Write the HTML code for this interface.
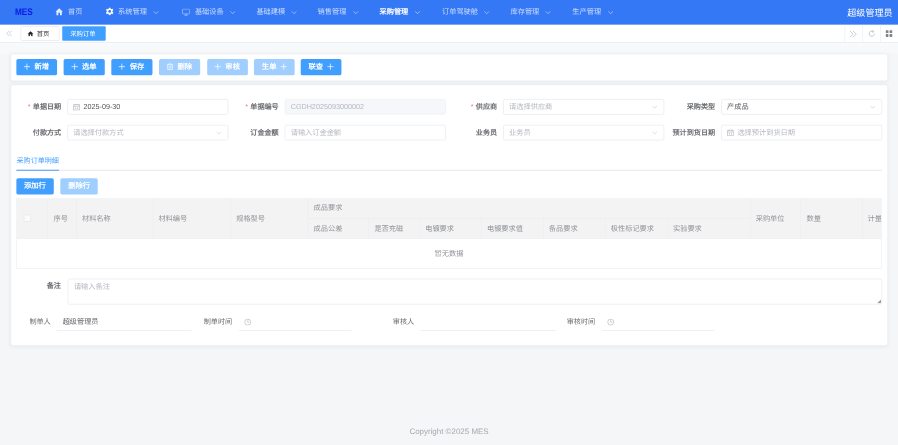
<!DOCTYPE html><html lang="zh-CN"><head><meta charset="utf-8"><title>MES</title><style>
*{box-sizing:border-box;margin:0;padding:0}
html,body{width:898px;height:445px;overflow:hidden;background:#f5f6f8}
body{font-family:"Liberation Sans",sans-serif;}
#root{position:absolute;left:0;top:0;width:1920px;height:951.5px;transform:scale(0.4677083);transform-origin:0 0;background:#f5f6f8;overflow:hidden;font-size:15px;color:#606266;text-rendering:geometricPrecision;filter:blur(0.5px)}
.abs{position:absolute;white-space:nowrap}
#hdr{position:absolute;left:0;top:0;width:1920px;height:53px;background:#3478f6}
.mi{position:absolute;top:0;height:54px;line-height:52.5px;font-size:15.4px;color:rgba(255,255,255,.72);white-space:nowrap}
.chev{position:absolute;top:20px;width:13.4px;height:13.4px;margin-left:-1.2px}
#tabs{position:absolute;left:0;top:53px;width:1920px;height:38px;background:#fff;border-bottom:1px solid #cdd0d8;box-shadow:0 1px 3px rgba(0,0,0,.06)}
.tab{position:absolute;top:3.4px;height:31px;line-height:29.5px;font-size:13.6px;border:1px solid #d8dce5;background:#fff;color:#333;white-space:nowrap;border-radius:2px}
.tab.on{background:#409eff;border-color:#409eff;color:#fff}
.tool{position:absolute;top:0;width:38px;height:37.5px;border-left:1px solid #e6e8ee}
.card{position:absolute;left:22.6px;width:1875.2px;background:#fff;border-radius:4px;border:1px solid #e9ecf3;box-shadow:0 2px 10px rgba(0,0,0,.055)}
.btn{position:absolute;height:35px;line-height:35px;margin-top:-1px;border-radius:4px;background:#409eff;color:#fff;font-size:15.6px;font-weight:bold;text-align:center;white-space:nowrap}
.btn.dis{background:#a0cfff}
.lbl{position:absolute;text-align:right;font-size:15.2px;color:#6a6c70;font-weight:bold;white-space:nowrap;height:33px;line-height:33px;width:140px}
.lbl i{color:#f56c6c;font-style:normal;font-weight:normal;margin-right:5px}
.inp{position:absolute;height:33px;line-height:31px;border:1px solid #dcdfe6;border-radius:4px;background:#fff;font-size:15.4px;color:#56585c;white-space:nowrap;overflow:hidden;padding-left:12px}
.inp.ph{color:#b4b8c0}
.inp.dis{background:#f5f7fa;border-color:#e8ebf0;color:#b4b8c0}
.inp svg.ar{position:absolute;right:13px;top:10px;width:12px;height:12px}
.th{position:absolute;font-size:15.4px;color:#909399;white-space:nowrap;line-height:20px}
.vl{position:absolute;width:1px;background:#e9ebf0}
.hl{position:absolute;height:1px;background:#e6e8ee}
.ul{position:absolute;height:1px;background:#dcdfe6}
</style></head><body><div id="root">
<div id="hdr">
<div class="abs" style="left:31.6px;top:0px;line-height:51px;font-size:20.5px;font-weight:bold;color:#0b18e6;transform:scaleX(.86);transform-origin:0 50%">MES</div>
<svg class="abs" style="left:118.4px;top:17px;width:17px;height:16.5px" viewBox="0 0 16 16"><path d="M8 0.8 L0.3 8 H2.4 V15.2 H6.3 V10 H9.7 V15.2 H13.6 V8 H15.7 Z" fill="rgba(255,255,255,.85)"/></svg>
<div class="mi" style="left:145.6px">首页</div>
<svg class="abs" style="left:225.6px;top:16.4px;width:17px;height:17px" viewBox="-8 -8 16 16"><g fill="rgba(255,255,255,.9)"><circle r="5.6"/><rect x="-2" y="-7.8" width="4" height="15.6" rx="0.8"/><rect x="-2" y="-7.8" width="4" height="15.6" rx="0.8" transform="rotate(60)"/><rect x="-2" y="-7.8" width="4" height="15.6" rx="0.8" transform="rotate(120)"/></g><circle r="2.7" fill="#3478f6"/></svg>
<div class="mi" style="left:252.5px">系统管理</div>
<svg class="chev" style="left:328.0px" viewBox="0 0 12 12"><path d="M1.5 3.8 L6 8.3 L10.5 3.8" fill="none" stroke="rgba(255,255,255,.62)" stroke-width="1.45"/></svg>
<svg class="abs" style="left:388.5px;top:17.5px;width:17.5px;height:16px" viewBox="0 0 18 16"><rect x="1.2" y="1.2" width="15.6" height="10.6" rx="1.6" fill="none" stroke="rgba(255,255,255,.62)" stroke-width="1.4"/><path d="M5.5 14.8 H12.5 M9 12 V14.8" stroke="rgba(255,255,255,.62)" stroke-width="1.5" fill="none"/></svg>
<div class="mi" style="left:416.7px">基础设备</div>
<svg class="chev" style="left:492.2px" viewBox="0 0 12 12"><path d="M1.5 3.8 L6 8.3 L10.5 3.8" fill="none" stroke="rgba(255,255,255,.62)" stroke-width="1.45"/></svg>
<div class="mi" style="left:548.2px">基础建模</div>
<svg class="chev" style="left:623.5px" viewBox="0 0 12 12"><path d="M1.5 3.8 L6 8.3 L10.5 3.8" fill="none" stroke="rgba(255,255,255,.62)" stroke-width="1.45"/></svg>
<div class="mi" style="left:679.1px">销售管理</div>
<svg class="chev" style="left:755.6px" viewBox="0 0 12 12"><path d="M1.5 3.8 L6 8.3 L10.5 3.8" fill="none" stroke="rgba(255,255,255,.62)" stroke-width="1.45"/></svg>
<div class="mi" style="left:811.4px;color:#fff;font-weight:bold">采购管理</div>
<svg class="chev" style="left:887.3px" viewBox="0 0 12 12"><path d="M1.5 3.8 L6 8.3 L10.5 3.8" fill="none" stroke="rgba(255,255,255,.66)" stroke-width="1.45"/></svg>
<div class="mi" style="left:945.0px">订单驾驶舱</div>
<svg class="chev" style="left:1034.8px" viewBox="0 0 12 12"><path d="M1.5 3.8 L6 8.3 L10.5 3.8" fill="none" stroke="rgba(255,255,255,.62)" stroke-width="1.45"/></svg>
<div class="mi" style="left:1091.5px">库存管理</div>
<svg class="chev" style="left:1166.5px" viewBox="0 0 12 12"><path d="M1.5 3.8 L6 8.3 L10.5 3.8" fill="none" stroke="rgba(255,255,255,.62)" stroke-width="1.45"/></svg>
<div class="mi" style="left:1223.6px">生产管理</div>
<svg class="chev" style="left:1300.0px" viewBox="0 0 12 12"><path d="M1.5 3.8 L6 8.3 L10.5 3.8" fill="none" stroke="rgba(255,255,255,.62)" stroke-width="1.45"/></svg>
<div class="abs" style="left:1811.6px;top:2.6px;line-height:51px;font-size:19.4px;color:#fff">超级管理员</div>
</div>
<div id="tabs">
<svg class="abs" style="left:12.0px;top:11px;width:15px;height:15px" viewBox="0 0 12 12"><path d="M6 1.5 L1.5 6 L6 10.5 M10.5 1.5 L6 6 L10.5 10.5" fill="none" stroke="#c4c8d0" stroke-width="1.3"/></svg>
<div class="tab" style="left:43.6px;width:83.4px"><svg style="position:absolute;left:14px;top:8.6px;width:12.5px;height:12.5px" viewBox="0 0 16 16"><path d="M8 1 L0.5 8 H2.5 V15 H6.3 V10 H9.7 V15 H13.5 V8 H15.5 Z" fill="#222"/></svg><span style="position:absolute;left:34px">首页</span></div>
<div class="tab on" style="left:133.0px;width:93.4px;padding-left:16px">采购订单</div>
<div class="tool" style="left:1806px">
<svg style="position:absolute;left:7.5px;top:10.5px;width:18px;height:18px" viewBox="0 0 12 12"><path d="M1.5 1.5 L6 6 L1.5 10.5 M6 1.5 L10.5 6 L6 10.5" fill="none" stroke="#c6c9d0" stroke-width="1.3"/></svg>
</div>
<div class="tool" style="left:1844px">
<svg style="position:absolute;left:10.5px;top:11px;width:16px;height:16px" viewBox="0 0 12 12"><path d="M10.2 6 A4.2 4.2 0 1 1 8.2 2.4" fill="none" stroke="#b4b8c0" stroke-width="1.25"/><path d="M7.0 0.6 L9.4 2.7 L6.6 3.9" fill="none" stroke="#b4b8c0" stroke-width="1.15"/></svg>
</div>
<div class="tool" style="left:1882px">
<svg style="position:absolute;left:10px;top:10.5px;width:15.5px;height:15.5px" viewBox="0 0 12 12"><g fill="#80838a"><rect x="0.5" y="0.5" width="4.6" height="4.6" rx="1"/><rect x="6.9" y="0.5" width="4.6" height="4.6" rx="1"/><rect x="0.5" y="6.9" width="4.6" height="4.6" rx="1"/><rect x="6.9" y="6.9" width="4.6" height="4.6" rx="1"/></g></svg>
</div>
</div>
<div class="abs" style="left:0;top:91px;width:1920px;height:24px;background:linear-gradient(#f9fafc,#f7f8fa)"></div>
<div class="card" style="top:115.1px;height:57.6px"></div>
<div class="btn" style="left:34.6px;top:126.6px;width:87.4px"><svg style="position:absolute;left:15.2px;top:9.5px;width:15px;height:15px" viewBox="0 0 14 14"><path d="M7 0.8 V13.2 M0.8 7 H13.2" stroke="#fff" stroke-width="1.4" fill="none"/></svg><span style="position:absolute;left:39px">新增</span></div>
<div class="btn" style="left:136.4px;top:126.6px;width:87.4px"><svg style="position:absolute;left:15.2px;top:9.5px;width:15px;height:15px" viewBox="0 0 14 14"><path d="M7 0.8 V13.2 M0.8 7 H13.2" stroke="#fff" stroke-width="1.4" fill="none"/></svg><span style="position:absolute;left:39px">选单</span></div>
<div class="btn" style="left:238.2px;top:126.6px;width:87.4px"><svg style="position:absolute;left:15.2px;top:9.5px;width:15px;height:15px" viewBox="0 0 14 14"><path d="M7 0.8 V13.2 M0.8 7 H13.2" stroke="#fff" stroke-width="1.4" fill="none"/></svg><span style="position:absolute;left:39px">保存</span></div>
<div class="btn dis" style="left:340.4px;top:126.6px;width:87.4px"><svg style="position:absolute;left:15.2px;top:9.5px;width:15px;height:15px" viewBox="0 0 14 14"><path d="M0.8 3.2 H13.2 M4.6 3 V1.2 H9.4 V3 M2.4 3.4 V12.8 H11.6 V3.4 M5.6 5.8 V10.4 M8.4 5.8 V10.4" stroke="#fff" stroke-width="1.3" fill="none"/></svg><span style="position:absolute;left:39px">删除</span></div>
<div class="btn dis" style="left:442.8px;top:126.6px;width:87.4px"><svg style="position:absolute;left:15.2px;top:9.5px;width:15px;height:15px" viewBox="0 0 14 14"><path d="M7 0.8 V13.2 M0.8 7 H13.2" stroke="#fff" stroke-width="1.4" fill="none"/></svg><span style="position:absolute;left:39px">审核</span></div>
<div class="btn dis" style="left:542.9px;top:126.6px;width:87.4px"><span style="position:absolute;left:17px">生单</span><svg style="position:absolute;left:56px;top:9.5px;width:15px;height:15px" viewBox="0 0 14 14"><path d="M7 0.8 V13.2 M0.8 7 H13.2" stroke="#fff" stroke-width="1.4" fill="none"/></svg></div>
<div class="btn" style="left:642.5px;top:126.6px;width:87.4px"><span style="position:absolute;left:17px">联查</span><svg style="position:absolute;left:56px;top:9.5px;width:15px;height:15px" viewBox="0 0 14 14"><path d="M7 0.8 V13.2 M0.8 7 H13.2" stroke="#fff" stroke-width="1.4" fill="none"/></svg></div>
<div class="card" style="top:181.4px;height:557.1999999999999px"></div>
<div class="lbl" style="left:-9.1px;top:212.1px"><i>*</i>单据日期</div>
<div class="inp" style="left:143.5px;top:212.1px;width:344.2px;padding-left:34px"><svg style="position:absolute;left:11px;top:8px;width:15.5px;height:15.5px" viewBox="0 0 14 14"><path d="M1.2 2.4 H12.8 V12.8 H1.2 Z M1.2 5.6 H12.8 M4.2 0.8 V3.6 M9.8 0.8 V3.6 M5 7.5 V11 M9 7.5 V11" stroke="#a9adb6" stroke-width="1.15" fill="none"/></svg>2025-09-30</div>
<div class="lbl" style="left:455.9px;top:212.1px"><i>*</i>单据编号</div>
<div class="inp dis" style="left:608.5px;top:212.1px;width:344.2px">CGDH2025093000002</div>
<div class="lbl" style="left:922.9px;top:212.1px"><i>*</i>供应商</div>
<div class="inp ph" style="left:1075.5px;top:212.1px;width:344.2px"><svg class="ar" viewBox="0 0 12 12"><path d="M1.5 3.8 L6 8.3 L10.5 3.8" fill="none" stroke="#c0c4cc" stroke-width="1.2"/></svg>请选择供应商</div>
<div class="lbl" style="left:1389.0px;top:212.1px">采购类型</div>
<div class="inp" style="left:1541.6px;top:212.1px;width:344.2px"><svg class="ar" viewBox="0 0 12 12"><path d="M1.5 3.8 L6 8.3 L10.5 3.8" fill="none" stroke="#c0c4cc" stroke-width="1.2"/></svg>产成品</div>
<div class="lbl" style="left:-9.1px;top:266.8px">付款方式</div>
<div class="inp ph" style="left:143.5px;top:266.8px;width:344.2px"><svg class="ar" viewBox="0 0 12 12"><path d="M1.5 3.8 L6 8.3 L10.5 3.8" fill="none" stroke="#c0c4cc" stroke-width="1.2"/></svg>请选择付款方式</div>
<div class="lbl" style="left:455.9px;top:266.8px">订金金额</div>
<div class="inp ph" style="left:608.5px;top:266.8px;width:344.2px">请输入订金金额</div>
<div class="lbl" style="left:922.9px;top:266.8px">业务员</div>
<div class="inp ph" style="left:1075.5px;top:266.8px;width:344.2px"><svg class="ar" viewBox="0 0 12 12"><path d="M1.5 3.8 L6 8.3 L10.5 3.8" fill="none" stroke="#c0c4cc" stroke-width="1.2"/></svg>业务员</div>
<div class="lbl" style="left:1389.0px;top:266.8px">预计到货日期</div>
<div class="inp ph" style="left:1541.6px;top:266.8px;width:344.2px;padding-left:34px"><svg style="position:absolute;left:11px;top:8px;width:15.5px;height:15.5px" viewBox="0 0 14 14"><path d="M1.2 2.4 H12.8 V12.8 H1.2 Z M1.2 5.6 H12.8 M4.2 0.8 V3.6 M9.8 0.8 V3.6 M5 7.5 V11 M9 7.5 V11" stroke="#a9adb6" stroke-width="1.15" fill="none"/></svg>选择预计到货日期</div>
<div class="abs" style="left:35.3px;top:334.2px;line-height:20px;font-size:15.1px;color:#409eff">采购订单明细</div>
<div class="abs" style="left:34.9px;top:363.0px;width:1850.7px;height:2px;background:#e4e7ed"></div>
<div class="abs" style="left:35.3px;top:362.5px;width:90.9px;height:2.6px;background:#3d97f5"></div>
<div class="btn" style="left:34.9px;top:382.0px;width:79.8px">添加行</div>
<div class="btn dis" style="left:129.1px;top:382.0px;width:80.0px">删除行</div>
<div class="abs" style="left:34.6px;top:424.4px;width:1850.7px;height:150.1px;border:1px solid #e6e8ee;background:#fff;overflow:hidden">
<div class="abs" style="left:0;top:0;width:100%;height:84.5px;background:#f3f3f3"></div>
<div class="vl" style="left:65.3px;top:0.0px;height:84.5px"></div>
<div class="vl" style="left:127.7px;top:0.0px;height:84.5px"></div>
<div class="vl" style="left:291.1px;top:0.0px;height:84.5px"></div>
<div class="vl" style="left:457.4px;top:0.0px;height:84.5px"></div>
<div class="vl" style="left:622.9px;top:0.0px;height:84.5px"></div>
<div class="vl" style="left:752.9px;top:42.1px;height:42.4px"></div>
<div class="vl" style="left:861.5px;top:42.1px;height:42.4px"></div>
<div class="vl" style="left:993.5px;top:42.1px;height:42.4px"></div>
<div class="vl" style="left:1125.8px;top:42.1px;height:42.4px"></div>
<div class="vl" style="left:1258.4px;top:42.1px;height:42.4px"></div>
<div class="vl" style="left:1391.4px;top:42.1px;height:42.4px"></div>
<div class="vl" style="left:1568.2px;top:0.0px;height:84.5px"></div>
<div class="vl" style="left:1676.8px;top:0.0px;height:84.5px"></div>
<div class="vl" style="left:1807.4px;top:0.0px;height:84.5px"></div>
<div class="hl" style="left:623.9px;top:42.1px;width:945.2px"></div>
<div class="hl" style="left:0;top:84.5px;width:100%"></div>
<div class="abs" style="left:15.2px;top:33.2px;width:15.5px;height:15.5px;border:1px solid #dcdfe6;border-radius:2px;background:#fbfbfb"></div>
<div class="th" style="left:78.8px;top:32.2px">序号</div>
<div class="th" style="left:139.7px;top:32.2px">材料名称</div>
<div class="th" style="left:303.1px;top:32.2px">材料编号</div>
<div class="th" style="left:469.4px;top:32.2px">规格型号</div>
<div class="th" style="left:634.9px;top:11.1px">成品要求</div>
<div class="th" style="left:634.9px;top:53.3px">成品公差</div>
<div class="th" style="left:764.9px;top:53.3px">是否充磁</div>
<div class="th" style="left:873.5px;top:53.3px">电镀要求</div>
<div class="th" style="left:1005.5px;top:53.3px">电镀要求值</div>
<div class="th" style="left:1137.8px;top:53.3px">备品要求</div>
<div class="th" style="left:1270.4px;top:53.3px">极性标记要求</div>
<div class="th" style="left:1403.4px;top:53.3px">实验要求</div>
<div class="th" style="left:1580.2px;top:32.2px">采购单位</div>
<div class="th" style="left:1688.8px;top:32.2px">数量</div>
<div class="th" style="left:1819.4px;top:32.2px">计量单位</div>
<div class="abs" style="left:0;width:100%;text-align:center;top:108.7px;line-height:20px;font-size:15.4px;color:#909399">暂无数据</div>
</div>
<div class="lbl" style="left:-9.8px;top:595.0px">备注</div>
<div class="inp ph" style="left:145.0px;top:596.1px;width:1740.8px;height:54.5px;line-height:20px;padding-top:6px;padding-left:12px">请输入备注<svg style="position:absolute;right:1px;bottom:1px;width:9px;height:9px" viewBox="0 0 9 9"><path d="M8.5 0.5 V8.5 H0.5 Z" fill="#9a9a9a"/></svg></div>
<div class="lbl" style="font-weight:normal;left:-31.6px;top:672.0px">制单人</div>
<div class="ul" style="left:121.0px;top:706.4px;width:289.3px"></div>
<div class="abs" style="left:134.0px;top:678.5px;line-height:20px;font-size:15.3px;color:#606266">超级管理员</div>
<div class="lbl" style="font-weight:normal;left:356.4px;top:672.0px">制单时间</div>
<div class="ul" style="left:511.0px;top:706.4px;width:241.2px"></div>
<svg class="abs" style="left:522.2px;top:680.8px;width:15.5px;height:15.5px" viewBox="0 0 14 14"><circle cx="7" cy="7" r="5.8" fill="none" stroke="#a9adb6" stroke-width="1.15"/><path d="M7 3.6 V7.2 H9.6" fill="none" stroke="#a9adb6" stroke-width="1.15"/></svg>
<div class="lbl" style="font-weight:normal;left:745.4px;top:672.0px">审核人</div>
<div class="ul" style="left:898.0px;top:706.4px;width:291.4px"></div>
<div class="lbl" style="font-weight:normal;left:1132.5px;top:672.0px">审核时间</div>
<div class="ul" style="left:1287.1px;top:706.4px;width:241.2px"></div>
<svg class="abs" style="left:1298.3px;top:680.8px;width:15.5px;height:15.5px" viewBox="0 0 14 14"><circle cx="7" cy="7" r="5.8" fill="none" stroke="#a9adb6" stroke-width="1.15"/><path d="M7 3.6 V7.2 H9.6" fill="none" stroke="#a9adb6" stroke-width="1.15"/></svg>
<div class="abs" style="left:0;width:1920px;text-align:center;top:913.4px;line-height:20px;font-size:17px;color:#a6a8ad">Copyright ©2025 MES</div>
</div></body></html>
